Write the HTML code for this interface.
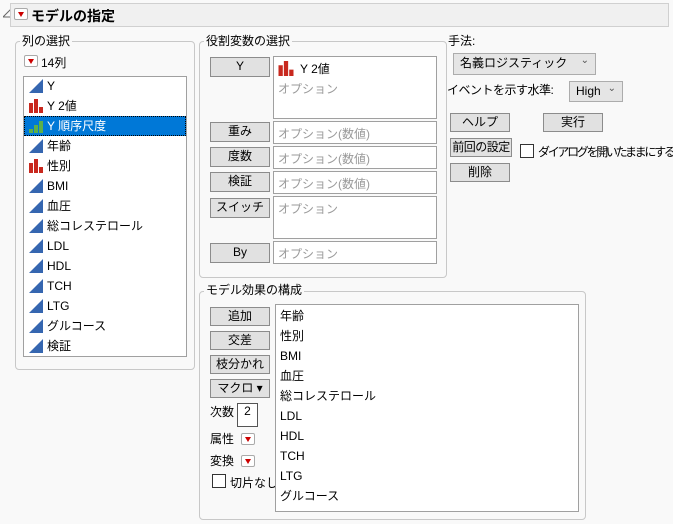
<!DOCTYPE html>
<html><head><meta charset="utf-8"><style>
*{box-sizing:border-box;margin:0;padding:0}
body{width:673px;height:524px;background:#f9f9f9;font-family:"Liberation Sans","Noto Sans CJK JP",sans-serif;font-size:12px;color:#000;position:relative;overflow:hidden}
.a{position:absolute;white-space:nowrap}
.hdr{left:10px;top:3px;width:659px;height:24px;background:#f0f0f0;border:1px solid #d0d0d0}
.rb{position:absolute;width:14px;height:12px;border:1px solid #aaa;background:#fff;border-radius:2px}
.rb:after{content:"";position:absolute;left:3px;top:3px;border-left:3.5px solid transparent;border-right:3.5px solid transparent;border-top:5px solid #c00}
.grp{position:absolute;border:1px solid #c8c8c8;border-radius:4px}
.lbl{position:absolute;background:#f9f9f9;padding:0 2px;line-height:14px}
.box{position:absolute;background:#fff;border:1px solid #a0a0a0}
.btn{position:absolute;background:#e1e1e1;border:1px solid #8c8c8c;text-align:center;line-height:17px}
.ph{color:#9a9a9a;position:absolute;left:4px}
.row{position:absolute;left:0;height:20px;line-height:20px;padding-left:23px;width:100%}
.tri{position:absolute;left:5px;top:3px;width:14px;height:14px}
.cb{position:absolute;width:14px;height:14px;background:#fff;border:1px solid #333}
.dd{position:absolute;background:#e5e5e5;border:1px solid #acacac;line-height:19px;padding-left:6px}
.dd:after{content:"⌄";position:absolute;right:6px;top:-3px;color:#555;font-size:10px}
</style></head><body>
<svg class="a" style="left:3px;top:9px" width="9" height="9"><path d="M8 0V8H0Z" fill="none" stroke="#666"/></svg>
<div class="a hdr"></div>
<div class="rb" style="left:14px;top:8px"></div>
<div class="a" style="left:31px;top:6px;font-size:14px;font-weight:bold">モデルの指定</div>

<div class="grp" style="left:15px;top:41px;width:180px;height:329px"></div>
<div class="lbl" style="left:20px;top:34px">列の選択</div>
<div class="rb" style="left:24px;top:55px"></div>
<div class="a" style="left:41px;top:54px">14列</div>
<div class="box" style="left:23px;top:76px;width:164px;height:281px">
<div class="row" style="top:-1px"><svg class="tri" viewBox="0 0 14 14"><path d="M14 0V14H0Z" fill="#3566b0"/></svg>Y</div>
<div class="row" style="top:19px"><svg class="tri" viewBox="0 0 14 14"><path d="M0 4h4v10H0ZM5 0h4v14H5ZM10 8h4v6h-4Z" fill="#c8281e"/></svg>Y 2値</div>
<div class="row" style="top:39px;background:#0078d7;color:#fff;outline:1px dotted #000;outline-offset:-1px"><svg class="tri" viewBox="0 0 14 14"><path d="M0 10h4v4H0ZM5 6h4v8H5ZM10 2h4v12h-4Z" fill="#5cb04a"/></svg>Y 順序尺度</div>
<div class="row" style="top:59px"><svg class="tri" viewBox="0 0 14 14"><path d="M14 0V14H0Z" fill="#3566b0"/></svg>年齢</div>
<div class="row" style="top:79px"><svg class="tri" viewBox="0 0 14 14"><path d="M0 4h4v10H0ZM5 0h4v14H5ZM10 8h4v6h-4Z" fill="#c8281e"/></svg>性別</div>
<div class="row" style="top:99px"><svg class="tri" viewBox="0 0 14 14"><path d="M14 0V14H0Z" fill="#3566b0"/></svg>BMI</div>
<div class="row" style="top:119px"><svg class="tri" viewBox="0 0 14 14"><path d="M14 0V14H0Z" fill="#3566b0"/></svg>血圧</div>
<div class="row" style="top:139px"><svg class="tri" viewBox="0 0 14 14"><path d="M14 0V14H0Z" fill="#3566b0"/></svg>総コレステロール</div>
<div class="row" style="top:159px"><svg class="tri" viewBox="0 0 14 14"><path d="M14 0V14H0Z" fill="#3566b0"/></svg>LDL</div>
<div class="row" style="top:179px"><svg class="tri" viewBox="0 0 14 14"><path d="M14 0V14H0Z" fill="#3566b0"/></svg>HDL</div>
<div class="row" style="top:199px"><svg class="tri" viewBox="0 0 14 14"><path d="M14 0V14H0Z" fill="#3566b0"/></svg>TCH</div>
<div class="row" style="top:219px"><svg class="tri" viewBox="0 0 14 14"><path d="M14 0V14H0Z" fill="#3566b0"/></svg>LTG</div>
<div class="row" style="top:239px"><svg class="tri" viewBox="0 0 14 14"><path d="M14 0V14H0Z" fill="#3566b0"/></svg>グルコース</div>
<div class="row" style="top:259px"><svg class="tri" viewBox="0 0 14 14"><path d="M14 0V14H0Z" fill="#3566b0"/></svg>検証</div>
</div>

<div class="grp" style="left:199px;top:41px;width:248px;height:237px"></div>
<div class="lbl" style="left:204px;top:34px">役割変数の選択</div>
<div class="btn" style="left:210px;top:57px;width:60px;height:20px">Y</div>
<div class="box" style="left:273px;top:56px;width:164px;height:63px">
<svg class="a" style="left:4px;top:4px" width="16" height="15" viewBox="0 0 14 14"><path d="M0 4h4v10H0ZM5 0h4v14H5ZM10 8h4v6h-4Z" fill="#c8281e"/></svg>
<div class="a" style="left:26px;top:3px">Y 2値</div>
<div class="ph" style="top:23px">オプション</div></div>
<div class="btn" style="left:210px;top:122px;width:60px;height:20px">重み</div>
<div class="box" style="left:273px;top:121px;width:164px;height:23px"><div class="ph" style="top:3px">オプション(数値)</div></div>
<div class="btn" style="left:210px;top:147px;width:60px;height:20px">度数</div>
<div class="box" style="left:273px;top:146px;width:164px;height:23px"><div class="ph" style="top:3px">オプション(数値)</div></div>
<div class="btn" style="left:210px;top:172px;width:60px;height:20px">検証</div>
<div class="box" style="left:273px;top:171px;width:164px;height:23px"><div class="ph" style="top:3px">オプション(数値)</div></div>
<div class="btn" style="left:210px;top:198px;width:60px;height:20px">スイッチ</div>
<div class="box" style="left:273px;top:196px;width:164px;height:43px"><div class="ph" style="top:3px">オプション</div></div>
<div class="btn" style="left:210px;top:243px;width:60px;height:20px">By</div>
<div class="box" style="left:273px;top:241px;width:164px;height:23px"><div class="ph" style="top:3px">オプション</div></div>

<div class="a" style="left:448px;top:32px">手法:</div>
<div class="dd" style="left:453px;top:53px;width:143px;height:22px">名義ロジスティック</div>
<div class="a" style="left:447px;top:81px;letter-spacing:-0.5px">イベントを示す水準:</div>
<div class="dd" style="left:569px;top:81px;width:54px;height:21px">High</div>
<div class="btn" style="left:450px;top:113px;width:60px;height:19px">ヘルプ</div>
<div class="btn" style="left:543px;top:113px;width:60px;height:19px">実行</div>
<div class="btn" style="left:450px;top:138px;width:62px;height:19px;letter-spacing:-0.5px">前回の設定</div>
<div class="cb" style="left:520px;top:144px"></div>
<div class="a" style="left:538px;top:143px;letter-spacing:-2.3px">ダイアログを開いたままにする</div>
<div class="btn" style="left:450px;top:163px;width:60px;height:19px">削除</div>

<div class="grp" style="left:199px;top:291px;width:387px;height:229px"></div>
<div class="lbl" style="left:204px;top:283px">モデル効果の構成</div>
<div class="btn" style="left:210px;top:307px;width:60px;height:19px">追加</div>
<div class="btn" style="left:210px;top:331px;width:60px;height:19px">交差</div>
<div class="btn" style="left:210px;top:355px;width:60px;height:19px">枝分かれ</div>
<div class="btn" style="left:210px;top:379px;width:60px;height:19px">マクロ ▾</div>
<div class="a" style="left:210px;top:403px">次数</div>
<div class="box" style="left:237px;top:403px;width:21px;height:24px;text-align:center;border-color:#555;line-height:14px">2</div>
<div class="a" style="left:210px;top:430px">属性</div>
<div class="rb" style="left:241px;top:433px"></div>
<div class="a" style="left:210px;top:452px">変換</div>
<div class="rb" style="left:241px;top:455px"></div>
<div class="cb" style="left:212px;top:474px"></div>
<div class="a" style="left:230px;top:474px">切片なし</div>
<div class="box" style="left:275px;top:304px;width:304px;height:208px;line-height:20px;padding-left:4px;padding-top:1px">年齢<br>性別<br>BMI<br>血圧<br>総コレステロール<br>LDL<br>HDL<br>TCH<br>LTG<br>グルコース</div>
</body></html>
